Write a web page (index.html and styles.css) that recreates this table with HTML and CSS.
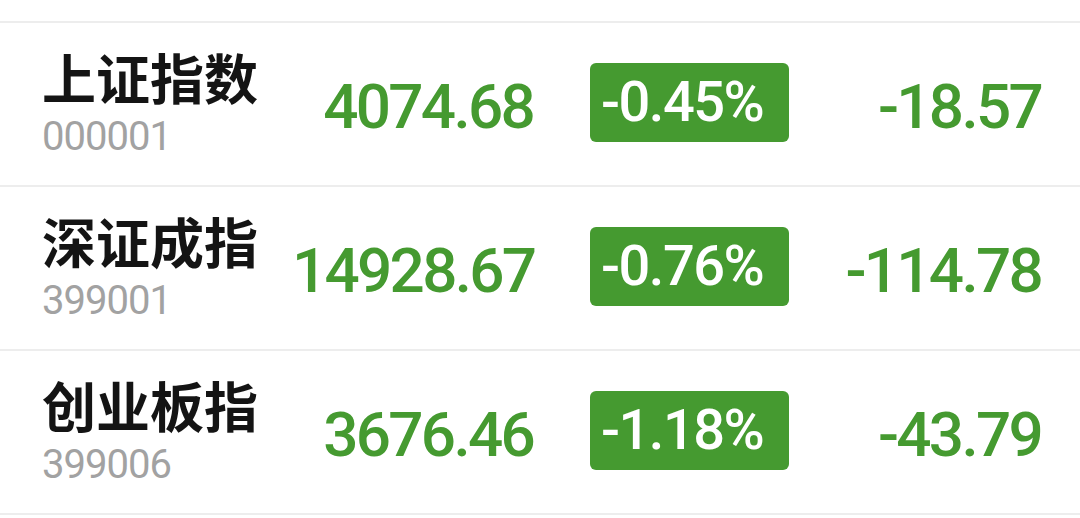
FILE: index.html
```html
<!DOCTYPE html>
<html lang="zh">
<head>
<meta charset="utf-8">
<link rel="stylesheet" href="styles.css">
</head>
<body>
<div class="list">
  <div class="row">
    <div class="name">
      <div class="title">上证指数</div>
      <div class="code">000001</div>
    </div>
    <div class="price">4074.68</div>
    <div class="badge">-0.45%</div>
    <div class="change">-18.57</div>
  </div>
  <div class="row">
    <div class="name">
      <div class="title">深证成指</div>
      <div class="code">399001</div>
    </div>
    <div class="price">14928.67</div>
    <div class="badge">-0.76%</div>
    <div class="change">-114.78</div>
  </div>
  <div class="row">
    <div class="name">
      <div class="title">创业板指</div>
      <div class="code">399006</div>
    </div>
    <div class="price">3676.46</div>
    <div class="badge">-1.18%</div>
    <div class="change">-43.79</div>
  </div>
</div>
</body>
</html>
```
FILE: styles.css
```css
html, body {
  margin: 0;
  padding: 0;
  background: #ffffff;
}
body {
  width: 1080px;
  height: 518px;
  overflow: hidden;
}
.list {
  padding-top: 21px;
}
.row {
  display: grid;
  grid-template-columns: 250px 241px 256px 252px;
  align-items: center;
  height: 162px;
  padding: 0 39px 0 42px;
  border-top: 2px solid #ededed;
}
.row:last-child {
  border-bottom: 2px solid #ededed;
}
.name {
  display: flex;
  flex-direction: column;
  margin-top: -4px;
}
.title {
  font-family: "Noto Sans CJK SC", "Noto Sans", sans-serif;
  font-weight: 700;
  font-size: 54px;
  line-height: 62px;
  color: #141414;
  margin-bottom: 8px;
}
.code {
  font-family: Roboto, "Noto Sans", sans-serif;
  font-weight: 400;
  font-size: 40px;
  line-height: 42px;
  letter-spacing: -1px;
  color: #a2a2a2;
}
.price, .change {
  font-family: Roboto, "Noto Sans", sans-serif;
  font-weight: 500;
  font-size: 62px;
  line-height: 70px;
  letter-spacing: -2.7px;
  color: #459a30;
  text-align: right;
  margin-top: 5px;
}
.badge {
  box-sizing: border-box;
  width: 199px;
  height: 79px;
  margin-left: 57px;
  margin-top: -3px;
  padding-left: 11px;
  border-radius: 6px;
  background: #459a30;
  color: #ffffff;
  font-family: Roboto, "Noto Sans", sans-serif;
  font-weight: 500;
  font-size: 56px;
  line-height: 79px;
  letter-spacing: -1.5px;
}
```
